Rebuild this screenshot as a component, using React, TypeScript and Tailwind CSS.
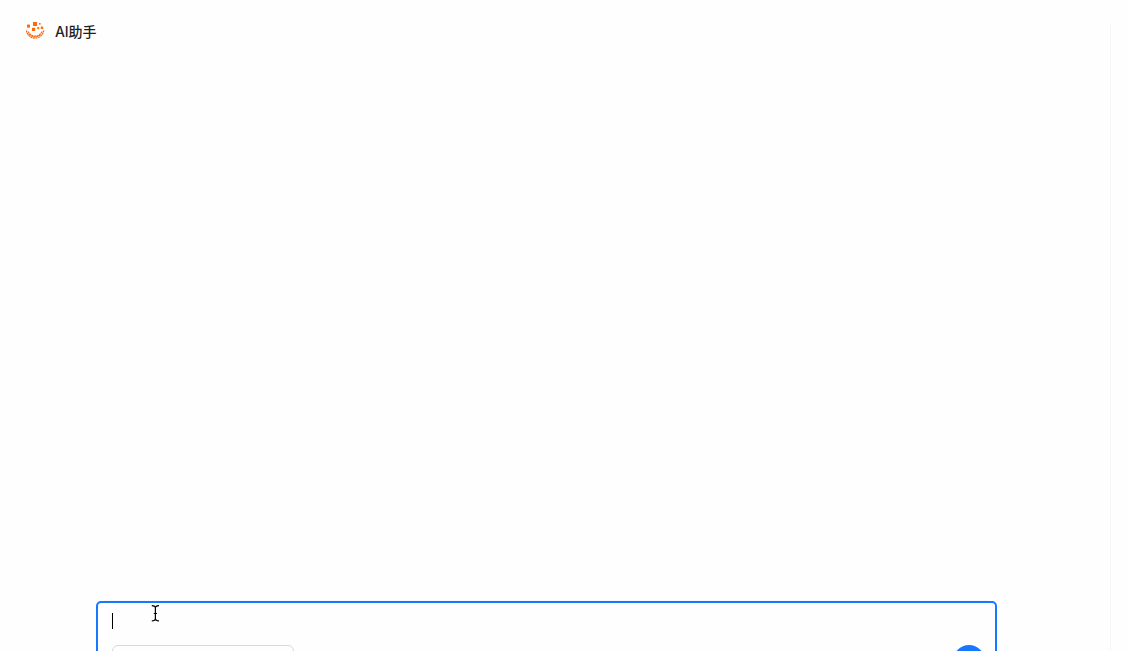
const DOTS = [
  { x: 13, y: 2, size: 4 },
  { x: 7, y: 4.6, size: 3 },
  { x: 19, y: 3, size: 1.6 },
  { x: 12, y: 7.8, size: 3.2 },
  { x: 17.2, y: 7.2, size: 2 },
  { x: 20.8, y: 6.6, size: 2.4 },
];

function Logo() {
  return (
    <svg width="30" height="24" viewBox="0 0 30 24" fill="#fa6a0a" aria-hidden="true">
      {DOTS.map((d) => (
        <rect key={`${d.x}-${d.y}`} x={d.x} y={d.y} width={d.size} height={d.size} />
      ))}
      <g fill="none" stroke="#fa6a0a" strokeWidth="1.2" strokeDasharray="2 0.6">
        <path d="M6.4 10.5C8 20.6 22 20.6 23.8 10.5" />
        <path d="M8 11.5C11 17.6 19 17.6 22.2 11.5" />
        <path d="M9 14C12.5 17.8 17.5 17.8 21 14" />
      </g>
    </svg>
  );
}

// text-input mouse pointer
function IBeam() {
  return (
    <svg className="absolute top-[2px] left-[53px]" width="9" height="17" viewBox="0 0 9 17" fill="none" stroke="#000" strokeWidth="1.2" aria-hidden="true">
      <path d="M0.8 0.6C2.6 0.6 4.4 1 4.4 3V13.4C4.4 15.4 2.6 15.8 0.8 15.8M8 0.6C6.2 0.6 4.4 1 4.4 3M4.4 13.4C4.4 15.4 6.2 15.8 8 15.8M2.8 8.5H6" />
    </svg>
  );
}

export default function App() {
  return (
    <div className="flex h-screen overflow-hidden bg-[#fefefe] font-['Inter','Noto_Sans_CJK_SC',sans-serif]">
      <main className="flex h-full w-[1110px] shrink-0 flex-col">
        <header className="flex h-16 shrink-0 items-center pl-5">
          <Logo />
          <h1 className="ml-[5px] text-sm leading-5 font-medium tracking-[-0.1px] text-[#1f1f1f]">AI助手</h1>
        </header>

        <section className="flex-1" />

        <div className="h-[51px] shrink-0 pl-24">
          <div className="ml-2 w-[885px] border-t border-dotted border-[#f0f0f0]" />
          <div className="flex h-[100px] w-[901px] flex-col rounded-[5px] border-2 border-[#1677ff] bg-[#fefefe]">
            <div className="relative h-[42px] shrink-0 pt-[10px] pl-[14px]">
              <div className="h-4 w-px bg-black" />
              <IBeam />
            </div>
            <div className="flex items-start justify-between pr-[10px] pl-[14px]">
              <div className="h-8 w-[182px] rounded-md border border-[#d9d9d9]" />
              <button type="button" aria-label="发送" className="size-8 rounded-full bg-[#1677ff]" />
            </div>
          </div>
        </div>
      </main>

      <div className="mt-[23px] w-px bg-[#f7f7f7]" />
    </div>
  );
}
